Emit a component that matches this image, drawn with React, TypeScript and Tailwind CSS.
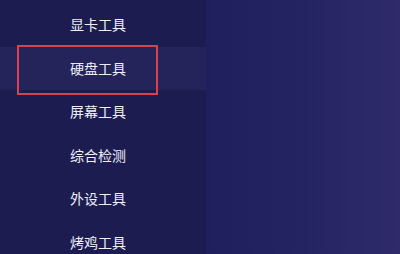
import React from 'react';

const items = ['显卡工具', '硬盘工具', '屏幕工具', '综合检测', '外设工具', '烤鸡工具'];

export default function App() {
  return (
    <div
      className="flex w-[400px] h-[254px] overflow-hidden bg-[#1d1c52]"
      style={{ fontFamily: '"Noto Sans CJK SC", "Noto Sans", sans-serif' }}
    >
      <div className="w-[206px] shrink-0 bg-[#1d1c51] pt-[3px]">
        {items.map((label, i) => (
          <div
            key={label}
            className={`relative flex items-center h-[43.5px] pl-[70px] text-[14px] text-[#efeff8] ${
              i === 1 ? 'bg-[#24235a]' : ''
            }`}
          >
            {label}
            {i === 1 && (
              <div className="absolute left-[17px] top-[-2px] w-[141px] h-[50px] border-2 border-[#d8414f]" />
            )}
          </div>
        ))}
      </div>
      <div className="flex-1 bg-gradient-to-r from-[#1f1f5e] via-[#252462] to-[#2f2b6b]" />
    </div>
  );
}
